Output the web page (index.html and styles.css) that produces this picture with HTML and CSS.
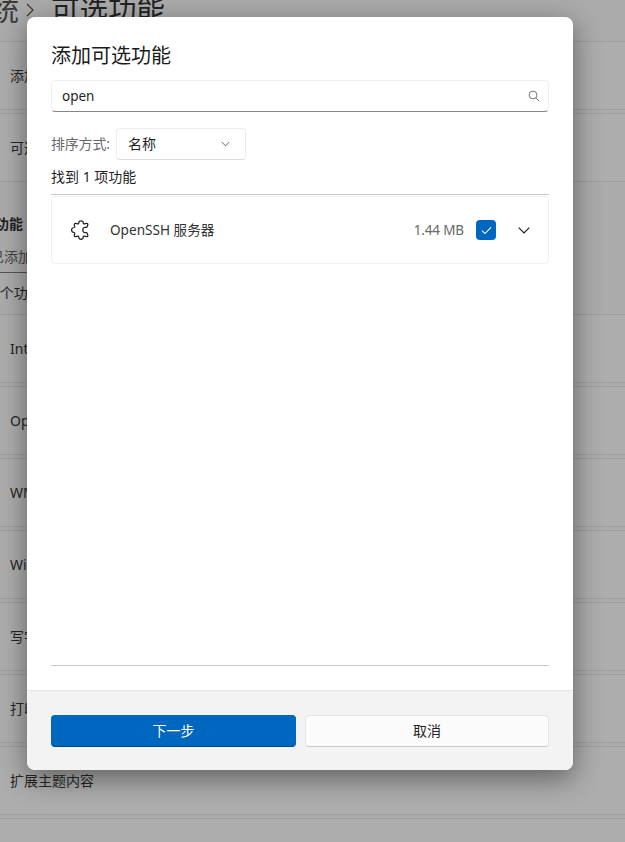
FILE: index.html
```html
<!DOCTYPE html>
<html lang="zh-CN">
<head>
<meta charset="utf-8">
<title>添加可选功能</title>
<link rel="stylesheet" href="styles.css">
</head>
<body>
<main class="page">
  <header class="crumbs">
    <span class="crumb">系统</span>
    <svg class="crumb-sep" viewBox="0 0 8 14" width="8" height="14"><path d="M1 1 7 7 1 13" fill="none" stroke="#333" stroke-width="1.1"/></svg>
    <h1 class="page-title">可选功能</h1>
  </header>
  <section class="group">
    <div class="row">添加可选功能</div>
    <div class="row">可选功能历史记录</div>
  </section>
  <h2 class="section-title">已添加功能</h2>
  <div class="filter">已添加功能</div>
  <div class="count">5 个功能</div>
  <section class="group">
    <div class="row">Internet Explorer</div>
    <div class="row">OpenSSH 客户端</div>
    <div class="row">WMIC</div>
    <div class="row">Windows Hello</div>
    <div class="row">写字板</div>
    <div class="row">打印管理</div>
    <div class="row">扩展主题内容</div>
    <div class="row"></div>
  </section>
</main>

<div class="dialog" role="dialog">
  <div class="dialog-body">
    <h2 class="dialog-title">添加可选功能</h2>
    <div class="search">
      <span class="search-text">open</span>
      <svg class="search-icon" viewBox="0 0 12 12" width="12" height="12"><circle cx="5" cy="5" r="3.9" fill="none" stroke="#777" stroke-width="1"/><path d="M7.8 7.8 11.3 11.3" stroke="#777" stroke-width="1"/></svg>
    </div>
    <div class="sort">
      <span class="sort-label">排序方式:</span>
      <div class="select">
        <span>名称</span>
        <svg viewBox="0 0 10 6" width="9" height="6"><path d="M.8.8 5 5 9.2.8" fill="none" stroke="#555" stroke-width="1"/></svg>
      </div>
    </div>
    <div class="found">找到 1 项功能</div>
    <div class="list">
      <div class="card">
        <svg class="puzzle" viewBox="0 0 20 22" width="20" height="22"><path d="M7.8 4C7.6 1 12.4 1 12.2 4 12.2 4.6 12.7 4.9 13.3 4.8L15.4 4.3C16.4 4.1 17 4.8 16.8 5.8L16.3 7.4C16.1 8.2 15.5 8.6 14.8 8.4 12.8 7.9 11.8 9.4 11.8 11 11.8 12.6 12.8 14.1 14.8 13.6 15.5 13.4 16.1 13.8 16.3 14.6L16.8 16.2C17 17.2 16.4 17.9 15.4 17.7L13.3 17.2C12.7 17.1 12.2 17.4 12.2 18 12.4 21 7.6 21 7.8 18 7.8 17.4 7.3 17.1 6.7 17.2L4.8 17.7C3.8 17.9 3.1 17.2 3.3 16.2L3.7 14.6C3.9 13.9 3.5 13.6 2.9 13.5-.2 13.1-.2 8.9 2.9 8.5 3.5 8.4 3.9 8.1 3.7 7.4L3.3 5.8C3.1 4.8 3.8 4.1 4.8 4.3L6.7 4.8C7.3 4.9 7.8 4.6 7.8 4Z" fill="none" stroke="#222" stroke-width="1.25"/></svg>
        <span class="card-name">OpenSSH 服务器</span>
        <span class="card-size">1.44 MB</span>
        <span class="check"><svg viewBox="0 0 12 10" width="11" height="9"><path d="M1 5.2 4.3 8.4 11 1.4" fill="none" stroke="#fff" stroke-width="1.2"/></svg></span>
        <svg class="expand" viewBox="0 0 12 7" width="12" height="7"><path d="M.7.7 6 6 11.3.7" fill="none" stroke="#222" stroke-width="1.2"/></svg>
      </div>
    </div>
  </div>
  <footer class="dialog-foot">
    <button class="btn btn-primary" type="button">下一步</button>
    <button class="btn" type="button">取消</button>
  </footer>
</div>
</body>
</html>
```

FILE: styles.css
```css
* { box-sizing: border-box; }
html, body { margin: 0; height: 100%; }
body {
  overflow: hidden;
  background: #ababab;
  color: #1f1f1f;
  font: 14px/20px "Noto Sans", "Noto Sans CJK SC", sans-serif;
}
.page { height: 842px; overflow: hidden; }
.crumbs {
  display: flex;
  align-items: center;
  height: 41px;
  margin-top: -11px;
  margin-left: -37px;
  font-size: 28px;
  line-height: 40px;
  color: #222;
}
.crumb { width: 56px; color: #3a3a3a; }
.crumb-sep { margin: 0 17px 0 7px; flex: none; }
.page-title { margin: 0; font-size: 28.5px; font-weight: 400; color: #222; }
.group { display: flex; flex-direction: column; gap: 3px; }
.crumbs + .group { margin-top: 11px; }
.row {
  height: 69px;
  padding-left: 10px;
  display: flex;
  align-items: center;
  border-top: 1px solid #9e9e9e;
  border-bottom: 1px solid #9e9e9e;
  background: #adadad;
  color: #262626;
}
.section-title { margin: 32px 0 0 -47px; font-size: 14px; line-height: 20px; font-weight: 700; color: #222; }
.filter { margin: 13px 0 0 -10px; width: 80px; height: 26px; color: #444; border-bottom: 1px solid #555; white-space: nowrap; }
.count { margin: 10px 0 11px -12px; color: #222; }
.dialog {
  position: absolute;
  left: 27px;
  top: 17px;
  width: 546px;
  height: 753px;
  display: flex;
  flex-direction: column;
  background: #fff;
  border-radius: 8px;
  overflow: hidden;
  box-shadow: 0 8px 28px rgba(0,0,0,.45);
}
.dialog-body { flex: 1; min-height: 0; display: flex; flex-direction: column; padding: 25px 24px 24px; }
.dialog-title { margin: 0 0 10px; font-size: 20px; line-height: 28px; font-weight: 400; color: #1b1b1b; }
.search {
  height: 32px;
  display: flex;
  align-items: center;
  justify-content: space-between;
  padding: 0 8px 0 10px;
  border: 1px solid #efefef;
  border-bottom-color: #868686;
  border-radius: 4px;
}
.search-text { font-size: 13.5px; }
.sort { display: flex; align-items: center; gap: 5px; margin-top: 16px; }
.sort-label { width: 60px; flex: none; color: #6a6a6a; white-space: nowrap; letter-spacing: -.2px; }
.select {
  width: 130px;
  height: 32px;
  padding: 0 15px 0 11px;
  display: flex;
  align-items: center;
  justify-content: space-between;
  border: 1px solid #ededed;
  border-bottom-color: #dcdcdc;
  border-radius: 4px;
}
.found { margin-top: 7px; height: 28px; border-bottom: 1px solid #c9c9c9; line-height: 20px; }
.list { flex: 1; border-bottom: 1px solid #c9c9c9; padding-top: 1px; }
.card {
  height: 68px;
  display: flex;
  align-items: center;
  padding: 0 18px 0 19px;
  border: 1px solid #f0f0f0;
  border-radius: 4px;
}
.puzzle { flex: none; }
.card-name { margin-left: 19px; flex: 1; color: #333; font-size: 13.6px; }
.card-size { color: #6a6a6a; font-size: 13.5px; letter-spacing: -.15px; }
.check {
  width: 20px;
  height: 20px;
  margin: 0 22px 0 12px;
  display: flex;
  align-items: center;
  justify-content: center;
  background: #0067c0;
  border-radius: 4px;
}
.dialog-foot {
  height: 80px;
  flex: none;
  display: grid;
  grid-template-columns: 245px 244px;
  gap: 9px;
  padding: 24px;
  background: #f3f3f3;
  border-top: 1px solid #e6e6e6;
}
.btn {
  height: 32px;
  border: 1px solid #e6e6e6;
  border-bottom-color: #cacaca;
  border-radius: 4px;
  background: #fbfbfb;
  color: #1f1f1f;
  font: inherit;
  padding: 0;
}
.btn-primary { background: #0067c0; border-color: #0067c0; border-bottom-color: #00487f; color: #fff; }
```
